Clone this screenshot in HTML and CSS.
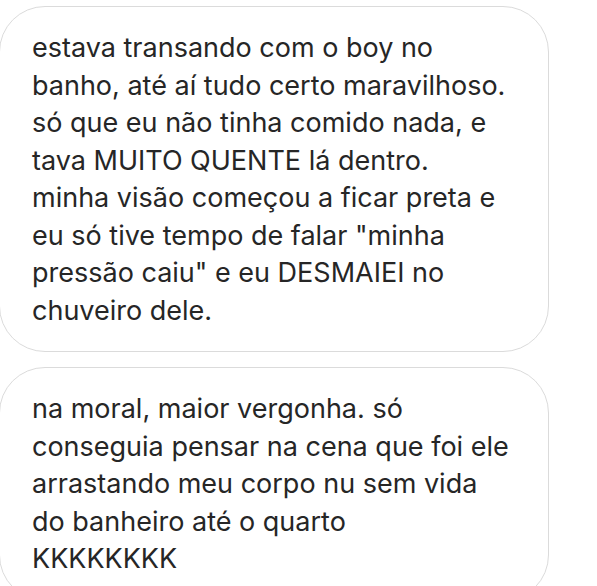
FILE: index.html
```html
<!DOCTYPE html>
<html lang="pt">
<head>
<meta charset="utf-8">
<link rel="stylesheet" href="styles.css">
</head>
<body>
<div class="thread">
  <div class="bubble">
    <p class="msg">estava transando com o boy no<br>banho, até aí tudo certo maravilhoso.<br>só que eu não tinha comido nada, e<br>tava MUITO QUENTE lá dentro.<br>minha visão começou a ficar preta e<br>eu só tive tempo de falar "minha<br>pressão caiu" e eu DESMAIEI no<br>chuveiro dele.</p>
  </div>
  <div class="bubble">
    <p class="msg">na moral, maior vergonha. só<br>conseguia pensar na cena que foi ele<br>arrastando meu corpo nu sem vida<br>do banheiro até o quarto<br>KKKKKKKK</p>
  </div>
</div>
</body>
</html>
```
FILE: styles.css
```css
html, body {
  margin: 0;
  background: #ffffff;
}
.thread {
  display: flex;
  flex-direction: column;
  gap: 15px;
  padding-top: 6px;
  margin-left: -1px;
}
.bubble {
  width: 550px;
  box-sizing: border-box;
  border: 1.5px solid #dbdbdb;
  border-radius: 46px;
  padding: 22px 20px 22px 32px;
  background: #fff;
}
.msg {
  margin: 0;
  font-family: Inter, Roboto, sans-serif;
  font-size: 27px;
  line-height: 37.5px;
  color: #262626;
  white-space: nowrap;
}
```
